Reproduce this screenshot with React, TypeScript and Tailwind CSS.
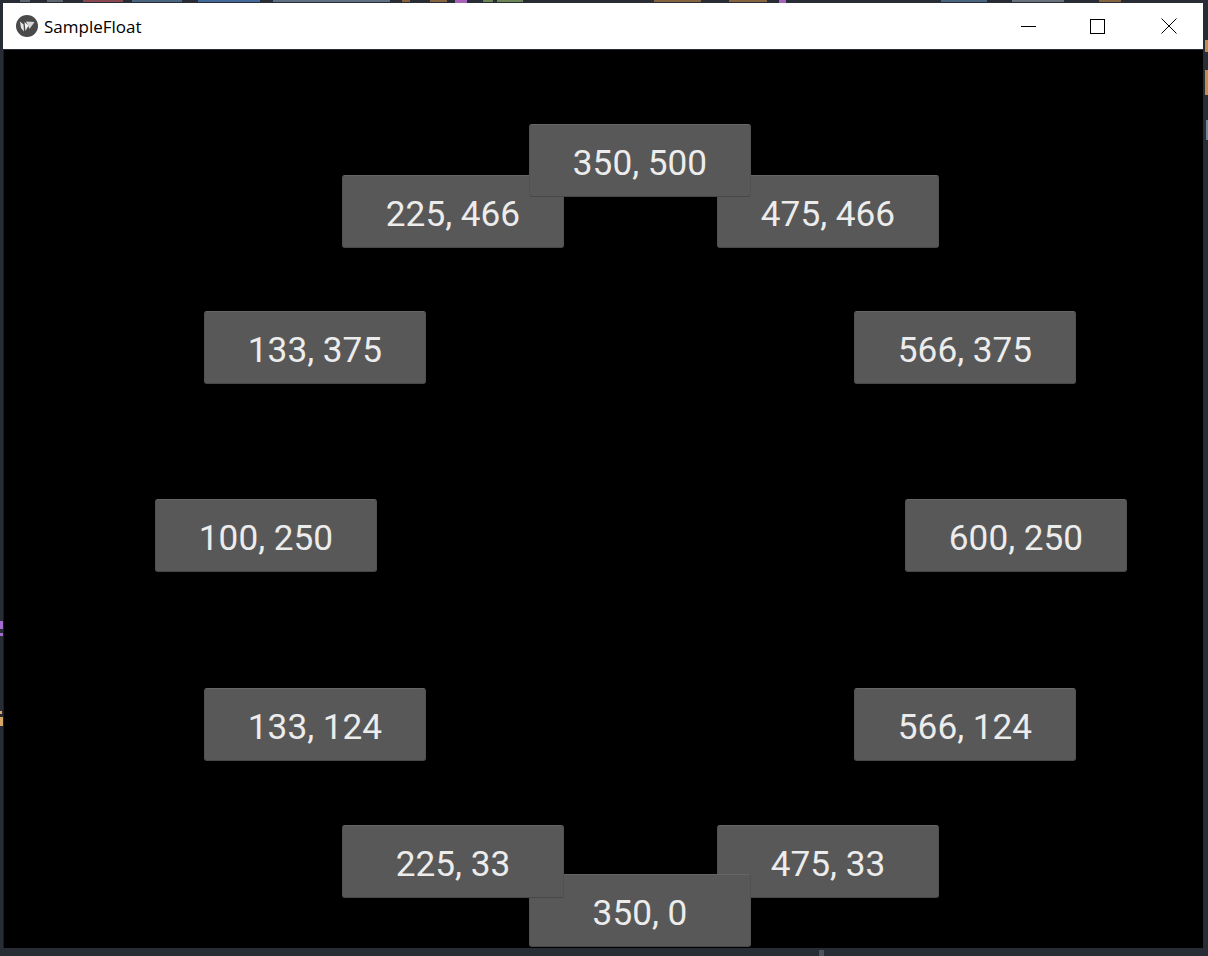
const buttons = [
  { label: "475, 33", x: 713, y: 775 },
  { label: "350, 0", x: 525, y: 824 },
  { label: "225, 33", x: 338, y: 775 },
  { label: "475, 466", x: 713, y: 125 },
  { label: "225, 466", x: 338, y: 125 },
  { label: "350, 500", x: 525, y: 74 },
  { label: "133, 375", x: 200, y: 261 },
  { label: "566, 375", x: 850, y: 261 },
  { label: "100, 250", x: 151, y: 449 },
  { label: "600, 250", x: 901, y: 449 },
  { label: "133, 124", x: 200, y: 638 },
  { label: "566, 124", x: 850, y: 638 },
];

// code from the editor window that peeks out around the app window
const codeBits = [
  { x: 20, y: 0, w: 10, h: 2, color: "#5f6670" },
  { x: 47, y: 0, w: 16, h: 2, color: "#5f6670" },
  { x: 83, y: 0, w: 40, h: 2, color: "#8a4650" },
  { x: 132, y: 0, w: 50, h: 2, color: "#4a6580" },
  { x: 198, y: 0, w: 62, h: 2, color: "#41699a" },
  { x: 273, y: 0, w: 117, h: 2, color: "#5f7082" },
  { x: 402, y: 0, w: 8, h: 2, color: "#86643f" },
  { x: 430, y: 0, w: 17, h: 2, color: "#86643f" },
  { x: 455, y: 0, w: 12, h: 3, color: "#a562b8" },
  { x: 483, y: 0, w: 10, h: 2, color: "#6c8656" },
  { x: 497, y: 0, w: 26, h: 2, color: "#6c8656" },
  { x: 654, y: 0, w: 47, h: 2, color: "#86643f" },
  { x: 729, y: 0, w: 38, h: 2, color: "#86643f" },
  { x: 779, y: 0, w: 7, h: 3, color: "#a562b8" },
  { x: 941, y: 0, w: 46, h: 2, color: "#4a6580" },
  { x: 1012, y: 0, w: 52, h: 2, color: "#6a727e" },
  { x: 1099, y: 0, w: 22, h: 2, color: "#86643f" },
  { x: 0, y: 621, w: 3, h: 8, color: "#a66bd0" },
  { x: 0, y: 633, w: 3, h: 3, color: "#a66bd0" },
  { x: 0, y: 711, w: 2, h: 3, color: "#d7a865" },
  { x: 0, y: 717, w: 3, h: 9, color: "#d7a865" },
  { x: 1205, y: 40, w: 3, h: 12, color: "#c58a50" },
  { x: 1205, y: 70, w: 3, h: 25, color: "#c58a50" },
  { x: 1206, y: 120, w: 2, h: 20, color: "#6f8498" },
  { x: 819, y: 950, w: 5, h: 6, color: "#4b5260" },
];

function KivyIcon() {
  return (
    <svg viewBox="0 0 22 22" className="h-[22px] w-[22px]" aria-hidden="true">
      <circle cx="11" cy="11" r="11" fill="#4a4a4a" />
      <path d="M4 6.5l3.5 3 .5 7-3-3.5z" fill="#e8e8e8" />
      <path d="M8.5 7l4 3.5-3 5.5z" fill="#f4f4f4" />
      <path d="M10 6.5l8.5.5-5 7z" fill="#d6d6d6" />
    </svg>
  );
}

export default function App() {
  return (
    <div className="relative h-[956px] w-[1208px] overflow-hidden bg-[#282c34] p-[3px] pb-[8px] pr-[5px]">
      {/* bits of the editor behind the window */}
      <svg viewBox="0 0 1208 956" className="absolute inset-0 h-full w-full" aria-hidden="true">
        {codeBits.map((c) => (
          <rect key={`${c.x}-${c.y}`} x={c.x} y={c.y} width={c.w} height={c.h} fill={c.color} />
        ))}
      </svg>

      <div className="relative flex h-full flex-col">
        {/* title bar */}
        <div className="flex h-[46px] items-center bg-white pl-[13px]">
          <KivyIcon />
          <span className="ml-[6px] pt-[2px] font-['Open_Sans',sans-serif] text-[17px] text-black">SampleFloat</span>
          <div className="ml-auto flex h-full items-center">
            <div className="flex h-full w-[65px] items-center justify-center">
              <div className="h-px w-[15px] bg-black" />
            </div>
            <div className="flex h-full w-[73px] items-center justify-center">
              <div className="h-[15px] w-[15px] border border-black" />
            </div>
            <div className="flex h-full w-[69px] items-center justify-center">
              <svg viewBox="0 0 16 16" className="h-4 w-4" aria-hidden="true">
                <path d="M.5.5l15 15M15.5.5l-15 15" stroke="#000" strokeWidth="1" fill="none" />
              </svg>
            </div>
          </div>
        </div>

        {/* float layout */}
        <div className="relative mt-px flex-1 border-l border-[#1c1c1c] bg-black">
          {buttons.map((b) => (
            <button
              key={b.label}
              className="absolute flex h-[73px] w-[222px] items-center justify-center rounded-[3px] border border-x-[#515151] border-t-[#656565] border-b-[#474747] bg-[#585858] pt-[6px] font-['Roboto',sans-serif] text-[35.2px] text-[#ececec]"
              style={{ left: b.x, top: b.y }}
            >
              {b.label}
            </button>
          ))}
        </div>
      </div>
    </div>
  );
}
